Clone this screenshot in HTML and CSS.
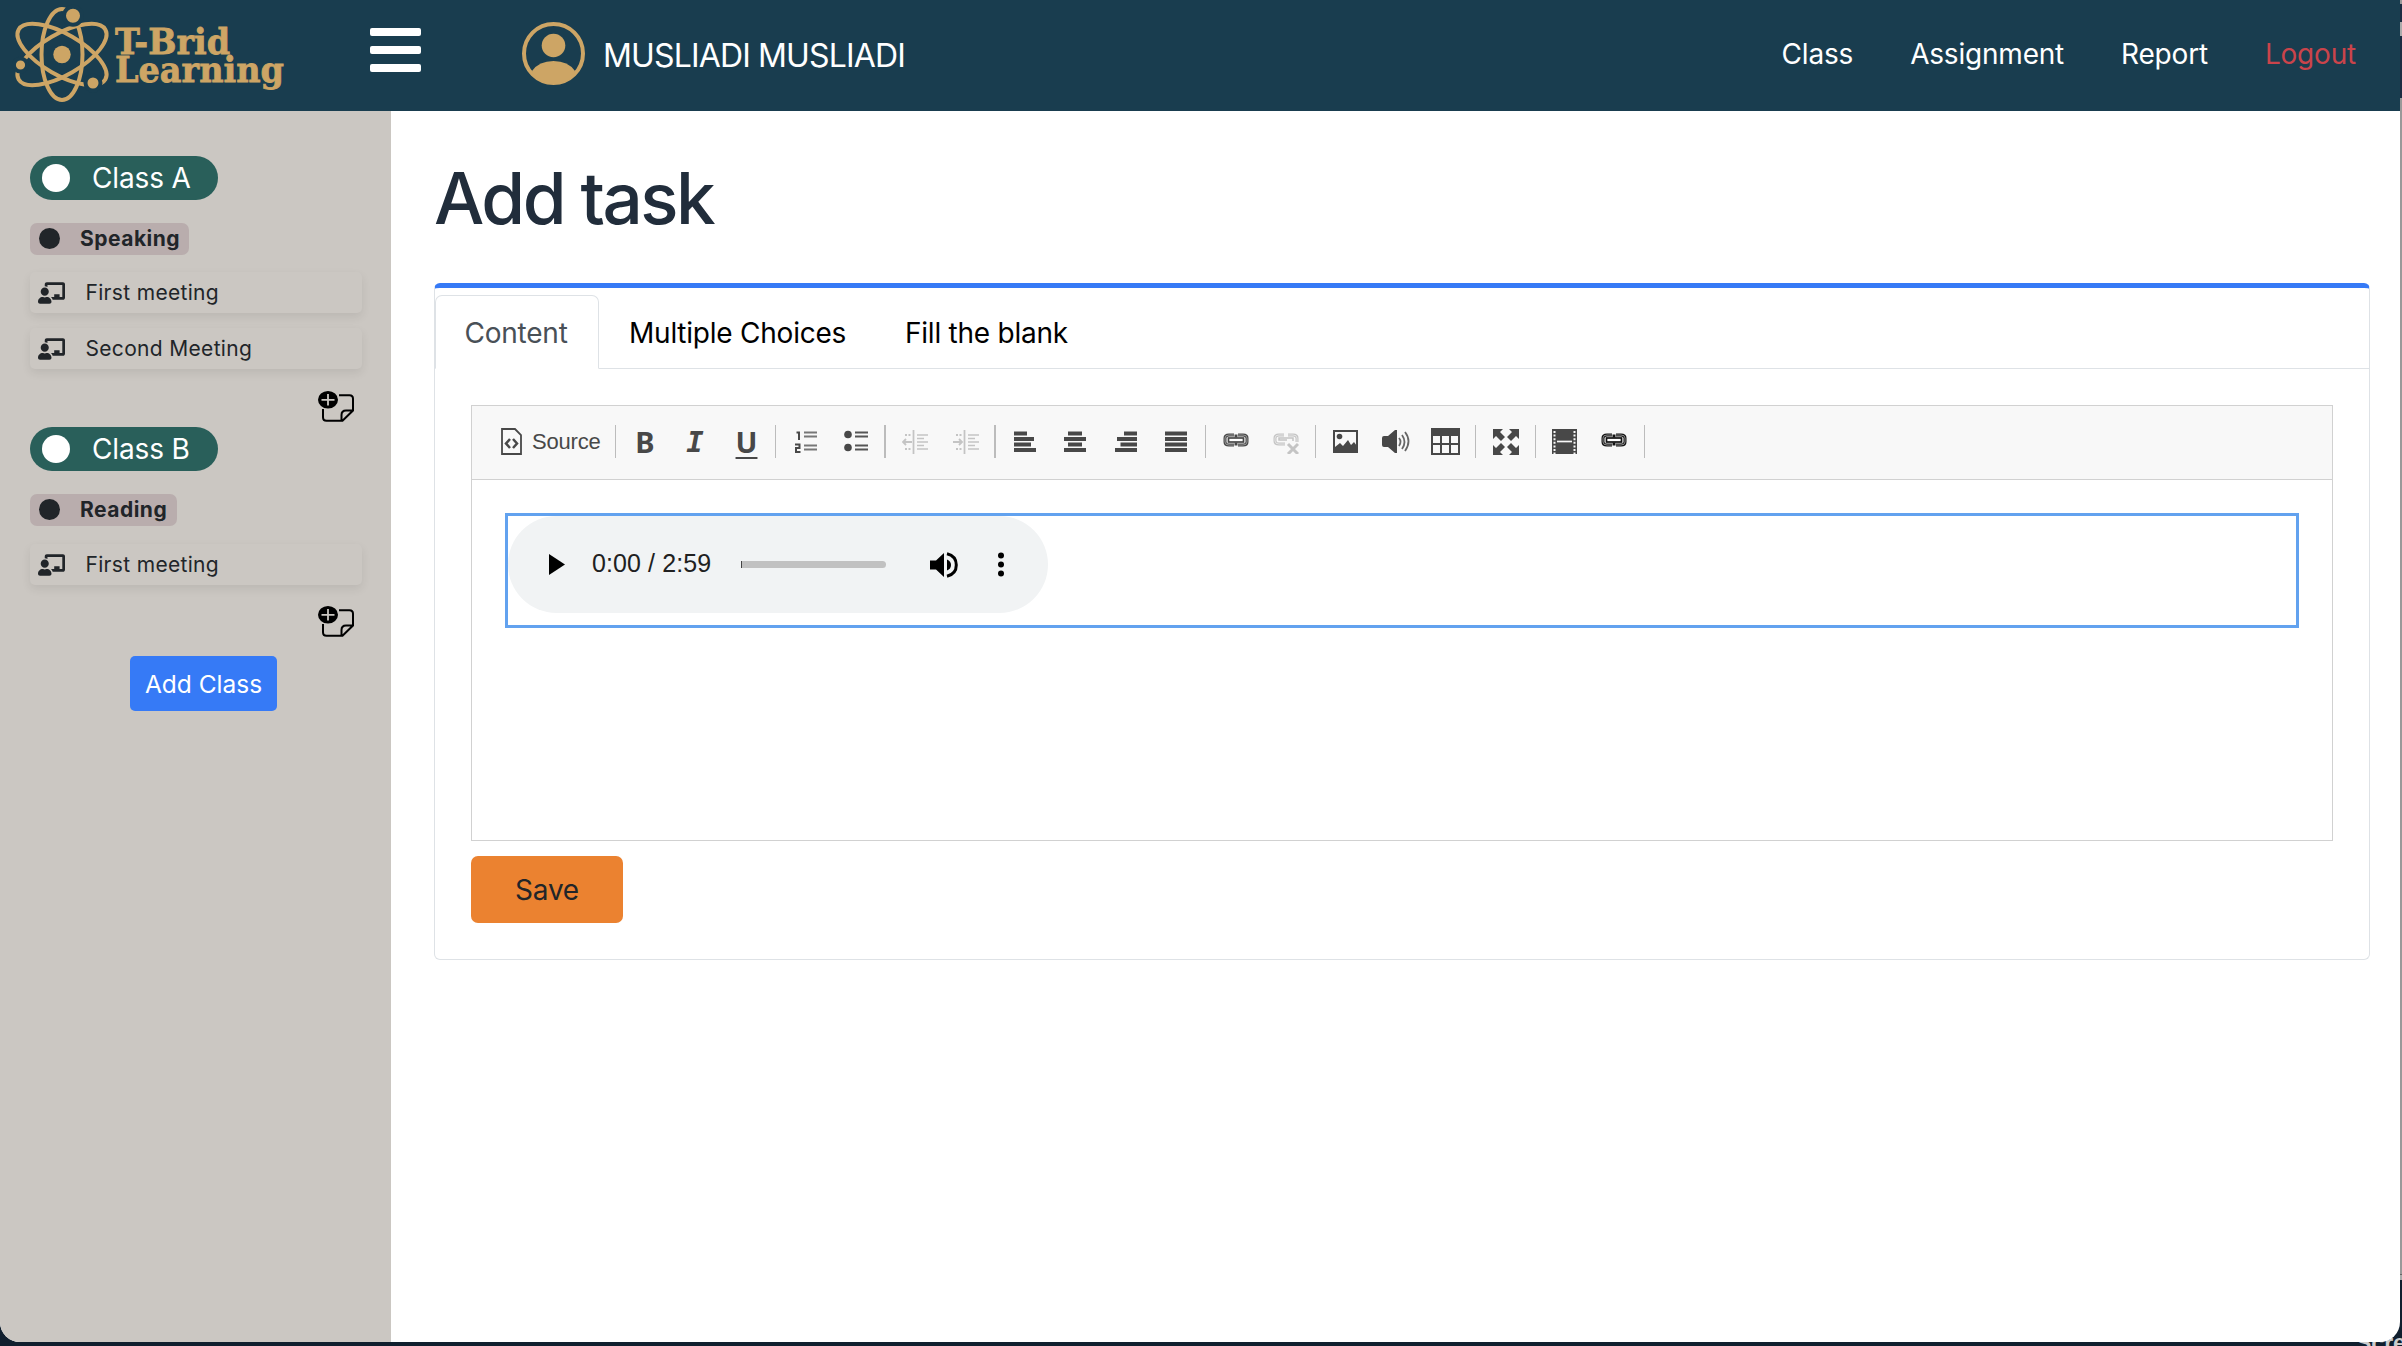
FILE: index.html
```html
<!DOCTYPE html>
<html lang="en">
<head>
<meta charset="utf-8">
<title>T-Brid Learning</title>
<link rel="stylesheet" href="styles.css">
</head>
<body>
<svg class="defs" width="0" height="0">
  <symbol id="teacher" viewBox="0 0 640 512"><path fill="currentColor" d="M208 352c-2.39 0-4.78.35-7.06 1.09C187.98 357.3 174.35 360 160 360c-14.35 0-27.98-2.7-40.95-6.91-2.28-.74-4.66-1.09-7.05-1.09C49.94 352-.33 402.48 0 464.62.14 490.88 21.73 512 48 512h224c26.27 0 47.86-21.12 48-47.38.33-62.14-49.94-112.62-112-112.62zm-48-32c53.02 0 96-42.98 96-96s-42.98-96-96-96-96 42.98-96 96 42.98 96 96 96zM592 0H208c-26.47 0-48 22.25-48 49.59V96c23.42 0 45.1 6.78 64 17.8V64h352v288h-64v-64H384v64h-76.24c19.1 16.69 33.12 38.73 39.69 64H592c26.47 0 48-22.25 48-49.59V49.59C640 22.25 618.47 0 592 0z"/></symbol>
  <symbol id="note" viewBox="0 0 36 31">
    <path d="M21 4.300h10.500q3.500 0 3.500 3.500v11.700L24.500 29.800H8.500q-3.500 0-3.500-3.500V18M35 19.600h-7q-4.500 0-4.500 4.500v5.500" fill="none" stroke="#000" stroke-width="2"/>
    <ellipse cx="10" cy="8.800" rx="10" ry="8.800" fill="#000"/>
    <path d="M10 3v11.600M3.500 8.800h13" stroke="#cbc7c2" stroke-width="1.800"/>
  </symbol>
  <symbol id="link" viewBox="0 0 26 14">
    <path d="M11 2H6Q2 2 2 5v4q0 3 4 3h5M15 2h5q4 0 4 3v4q0 3-4 3h-5" fill="none" stroke="currentColor" stroke-width="3"/>
    <path d="M11 2H6Q2 2 2 5v4q0 3 4 3h5M15 2h5q4 0 4 3v4q0 3-4 3h-5" fill="none" stroke="#aaa" stroke-width=".8"/>
    <path d="M13 1.500v3M13 9.500v3" stroke="currentColor" stroke-width="3"/>
    <rect x="5.500" y="5" width="15" height="4" fill="#fff" stroke="currentColor" stroke-width="1.700"/>
  </symbol>
</svg>
<div class="window">
  <header class="topbar">
    <svg class="logo" width="300" height="111" viewBox="0 0 300 111">
      <g fill="none" stroke="#cda565" stroke-width="4">
        <ellipse cx="62" cy="54.500" rx="20.500" ry="45.500"/>
        <ellipse cx="62" cy="54.500" rx="20.500" ry="50" transform="rotate(60 62 54.500)"/>
        <ellipse cx="62" cy="54.500" rx="20.500" ry="50" transform="rotate(-60 62 54.500)"/>
      </g>
      <g fill="#cda565" stroke="#193d4f" stroke-width="4">
        <circle cx="62" cy="54.500" r="8.700" stroke="none"/>
        <circle cx="73" cy="15.700" r="9"/>
        <circle cx="20.500" cy="65" r="6.600"/>
        <circle cx="93" cy="83" r="7.500"/>
      </g>
      <g class="logo-text">
        <text x="115" y="54" textLength="115" lengthAdjust="spacingAndGlyphs">T-Brid</text>
        <text x="115" y="82" textLength="169" lengthAdjust="spacingAndGlyphs">Learning</text>
      </g>
    </svg>
    <div class="burger"><i></i><i></i><i></i></div>
    <svg class="avatar" width="63" height="63" viewBox="0 0 63 63">
      <circle cx="31.500" cy="31.500" r="29.500" fill="none" stroke="#cda565" stroke-width="4"/>
      <circle cx="31.500" cy="23.500" r="11.800" fill="#cda565"/>
      <path d="M10 49Q17 39 31.500 39T53 49L51 55Q43 62 31.500 62T12 55z" fill="#cda565"/>
    </svg>
    <span class="user">MUSLIADI MUSLIADI</span>
    <nav class="nav"><a>Class</a><a>Assignment</a><a>Report</a><a class="logout">Logout</a></nav>
  </header>
  <div class="body">
    <aside class="side">
      <div class="pill"><i></i><span>Class A</span></div>
      <div class="badge"><i></i><span>Speaking</span></div>
      <div class="item"><svg width="27" height="22"><use href="#teacher"/></svg><span>First meeting</span></div>
      <div class="item"><svg width="27" height="22"><use href="#teacher"/></svg><span>Second Meeting</span></div>
      <svg class="note" width="36" height="31"><use href="#note"/></svg>
      <div class="pill"><i></i><span>Class B</span></div>
      <div class="badge reading"><i></i><span>Reading</span></div>
      <div class="item"><svg width="27" height="22"><use href="#teacher"/></svg><span>First meeting</span></div>
      <svg class="note last" width="36" height="31"><use href="#note"/></svg>
      <button class="add">Add Class</button>
    </aside>
    <main class="main">
      <h1>Add task</h1>
      <section class="card">
        <div class="tabs"><div class="tab active">Content</div><div class="tab mc">Multiple Choices</div><div class="tab">Fill the blank</div></div>
        <div class="pane">
          <div class="editor">
            <div class="tools">
              <div class="source"><svg width="21" height="27" viewBox="0 0 21 27" fill="none" stroke="#484848"><path d="M1 1h13l6 6v19H1z" stroke-width="1.800"/><path d="M9 11l-4 4.500L9 20M12 11l4 4.500L12 20" stroke-width="2.500"/></svg><span>Source</span></div>
              <s></s>
              <b class="bold">B</b><b class="ital">I</b><b class="und">U</b>
              <s></s>
              <b class="nudge"><svg width="24" height="24" viewBox="0 0 24 24"><path d="M10 2.500h13M10 6.500h13M10 15.500h13M10 19.500h13" stroke="#777" stroke-width="2"/><path d="M2.500 2.500H5V10M1 14.500h4.500v3.500H2v4h4.500" fill="none" stroke="#484848" stroke-width="2"/></svg></b>
              <b class="nudge"><svg width="24" height="24" viewBox="0 0 24 24"><path d="M11 2.500h13M11 6.500h13M11 15.500h13M11 19.500h13" stroke="#555" stroke-width="2"/><circle cx="4" cy="4.500" r="3.800"/><circle cx="4" cy="17.500" r="3.800"/></svg></b>
              <s class="wide"></s>
              <b class="dim"><svg width="26" height="24" viewBox="0 0 26 24" stroke="currentColor" fill="none"><path d="M11.500 0v24" stroke-width="1.800"/><path d="M15 5h11M15 8.500h7M15 12h11M15 15.500h7M15 19h11" stroke-width="1.500"/><path d="M3 5h6M3 19h6" stroke-width="2" stroke-dasharray="2 1.500"/><path d="M10 12H1M4 9l-3 3 3 3" stroke-width="1.800"/></svg></b>
              <b class="dim nudge"><svg width="26" height="24" viewBox="0 0 26 24" stroke="currentColor" fill="none"><path d="M11.500 0v24" stroke-width="1.800"/><path d="M15 5h11M15 8.500h7M15 12h11M15 15.500h7M15 19h11" stroke-width="1.500"/><path d="M3 5h6M3 19h6" stroke-width="2" stroke-dasharray="2 1.500"/><path d="M0 12h9M6 9l3 3-3 3" stroke-width="1.800"/></svg></b>
              <s class="wide"></s>
              <b><svg width="22" height="22" viewBox="0 0 22 22" stroke="#484848" stroke-width="4"><path d="M0 2.500h13M0 8h20M0 13.500h17M0 19h22"/></svg></b>
              <b><svg width="22" height="22" viewBox="0 0 22 22" stroke="#484848" stroke-width="4"><path d="M4 2.500h14M0 8h22M4 13.500h14M0 19h22"/></svg></b>
              <b class="nudge"><svg width="22" height="22" viewBox="0 0 22 22" stroke="#484848" stroke-width="4"><path d="M9 2.500h13M2 8h20M5.500 13.500H22M0 19h22"/></svg></b>
              <b class="nudge"><svg width="22" height="22" viewBox="0 0 22 22" stroke="#484848" stroke-width="4"><path d="M0 2.500h22M0 8h22M0 13.500h22M0 19h22"/></svg></b>
              <s></s>
              <b class="lnk nudge"><svg width="26" height="14"><use href="#link"/></svg></b>
              <b class="dim nudge"><svg width="26" height="24" viewBox="0 0 26 24" fill="none" stroke="currentColor"><path d="M11 5H6Q2 5 2 8v3q0 3 4 3h6M15 5h5q4 0 4 3v4" stroke-width="3"/><path d="M11 5H6Q2 5 2 8v3q0 3 4 3h6M15 5h5q4 0 4 3v4" stroke="#eee" stroke-width=".8"/><path d="M14 10H6V8h14v3" stroke-width="1.500"/><path d="M15 14l10 10M25 14L15 24" stroke-width="3"/></svg></b>
              <s></s>
              <b><svg width="25" height="23" viewBox="0 0 25 23"><rect x="1" y="1" width="23" height="21" fill="#f8f8f8" stroke="#484848" stroke-width="2"/><circle cx="6.500" cy="6.500" r="2.800"/><path d="M2 21v-4l5-4 3 3 5-6 3 5 3-3 3 4v5z"/></svg></b>
              <b class="nudge"><svg width="28" height="24" viewBox="0 0 28 24"><path d="M0 8q0-2 2-2h4l7-6h2v23h-2l-7-6H2q-2 0-2-2z"/><path d="M17 8q3 3.500 0 8M20 5q5 7 0 14M23 2q7 9 0 19" fill="none" stroke="#666" stroke-width="1.800"/></svg></b>
              <b><svg width="29" height="27" viewBox="0 0 29 27"><path d="M0 0h29v27H0z"/><path d="M2 8h7v7H2zM11 8h7v7h-7zM20 8h7v7h-7zM2 17h7v8H2zM11 17h7v8h-7zM20 17h7v8h-7z" fill="#f8f8f8"/></svg></b>
              <s></s>
              <b class="nudge"><svg width="26" height="26" viewBox="0 0 26 26"><path id="ar" d="M0 0h10L7 3l5 5-4 4-5-5-3 3z"/><use href="#ar" transform="matrix(-1 0 0 1 26 0)"/><use href="#ar" transform="matrix(1 0 0 -1 0 26)"/><use href="#ar" transform="matrix(-1 0 0 -1 26 26)"/></svg></b>
              <s></s>
              <b class="narrow"><svg width="25" height="25" viewBox="0 0 25 25"><path d="M0 0h25v25H0z"/><path d="M2.500 2v23M22.500 2v23" stroke="#f8f8f8" stroke-width="2" stroke-dasharray="2 1.600"/><path d="M5 12.500h15" stroke="#f8f8f8" stroke-width="1.700"/></svg></b>
              <b class="lnk dark"><svg width="26" height="14"><use href="#link"/></svg></b>
              <s></s>
            </div>
            <div class="content">
              <div class="selected">
                <div class="player">
                  <svg class="play" width="16" height="21" viewBox="0 0 16 21"><path d="M0 0l16 10.500L0 21z"/></svg>
                  <span class="time">0:00 / 2:59</span>
                  <div class="track"></div>
                  <svg class="vol" width="28" height="26" viewBox="0 0 28 26"><path d="M0 8.500h6L14 1v24l-8-7.500H0z"/><path d="M17 7.500q4 1.500 4 5.500t-4 5.500z"/><path d="M17 1.700Q26.300 4 26.300 13T17 24.300" fill="none" stroke="#000" stroke-width="3"/></svg>
                  <svg class="dots" width="6" height="25" viewBox="0 0 6 25"><circle cx="3" cy="3.500" r="3"/><circle cx="3" cy="12.500" r="3"/><circle cx="3" cy="21.500" r="3"/></svg>
                </div>
              </div>
            </div>
          </div>
          <button class="save">Save</button>
        </div>
      </section>
    </main>
  </div>
</div>
<div class="behind">Scre</div>
</body>
</html>
```
FILE: styles.css
```css
* { box-sizing: border-box; }
body { margin: 0; width: 2402px; height: 1346px; overflow: hidden; position: relative; background: #101f2e; font-family: Inter, "Liberation Sans", sans-serif; color: #212529; }
svg { display: block; flex: none; }
.defs { position: absolute; }
button { border: 0; padding: 0; font: inherit; }
span, a, h1, .tab { white-space: nowrap; }

/* desktop showing past the window's edges */
body::after { content: ""; position: absolute; right: 0; top: 0; width: 2px; height: 1280px; background: linear-gradient(#999 0 4px, #1c2c42 4px 22px, #aaa 22px 36px, #1c2c42 36px 98px, #999 98px 1274px, #666 1274px 1275px, #aaa 1275px); }
.behind { position: absolute; left: 2356px; top: 1330px; font: bold 23px/26px "Liberation Sans", sans-serif; color: #ccc; }

.window { position: relative; z-index: 1; width: 2400px; height: 1342px; border-radius: 0 0 20px 20px; overflow: hidden; background: #fff; }
.topbar { height: 111px; background: #193d4f; display: flex; align-items: flex-start; }
.logo-text { font: bold 36px "DejaVu Serif", serif; fill: #cda565; stroke: #cda565; stroke-width: .8px; }
.burger { width: 51px; margin: 28px 0 0 70px; display: grid; gap: 10px; }
.burger i { height: 8px; border-radius: 2px; background: #fff; }
.avatar { margin: 22px 0 0 101px; }
.user { margin-left: 18px; color: #fff; font-size: 32px; line-height: 112px; letter-spacing: -.85px; }
.nav { margin-left: auto; padding-right: 44px; display: flex; gap: 57px; font-size: 28px; line-height: 109px; letter-spacing: -.2px; color: #fff; }
.logout { color: #ca444b; }

.body { display: flex; height: 1231px; }
.side { width: 391px; background: #cbc7c2; padding: 45px 29px 0 30px; display: flex; flex-direction: column; align-items: flex-start; }
.pill { width: 188px; height: 44px; border-radius: 22px; background: #295f5a; color: #fff; display: flex; align-items: center; font-size: 28px; letter-spacing: -.15px; padding: 0 0 1px 12px; }
.pill i { width: 28px; height: 28px; border-radius: 50%; background: #fff; margin-right: 22px; }
.badge { width: 159px; height: 32px; margin-top: 23px; border-radius: 7px; background: #b9adad; display: flex; align-items: center; padding: 0 0 2px 9px; font-size: 21px; font-weight: 700; letter-spacing: .5px; }
.badge.reading { width: 147px; }
.badge i { width: 21px; height: 21px; border-radius: 50%; background: #212529; margin-right: 20px; }
.item { width: 332px; height: 41px; margin-top: 17px; border-radius: 5px; display: flex; align-items: center; gap: 20.500px; padding: 0 8px; font-size: 21px; letter-spacing: .32px; background: #cbc7c2; box-shadow: 0 4px 10px rgba(0,0,0,.08); }
.item + .item { margin-top: 15px; }
.note { margin: 22px 8px 5px auto; }
.reading + .item { margin-top: 18px; }
.note.last { margin-top: 21px; margin-bottom: 19px; }
.add { width: 147px; height: 55px; padding-top: 1px; margin-left: 100px; border-radius: 5px; background: #367af6; color: #fff; font-size: 24.500px; }

.main { flex: 1; padding: 40px 30px 0 43px; }
h1 { margin: 0; height: 132px; font-size: 71px; line-height: 94px; font-weight: 500; letter-spacing: -2.500px; color: #212d3b; }
.card { height: 677px; border: 1px solid #dee2e6; border-top: 5px solid #367af6; border-radius: 6px; }
.tabs { height: 81px; padding-top: 7px; display: flex; border-bottom: 1px solid #dee2e6; font-size: 28px; letter-spacing: -.23px; color: #000; }
.tab { height: 74px; display: flex; align-items: center; padding: 2px 0 0 30px; }
.tab.active { width: 164px; padding-left: 28.500px; border: 1px solid #dee2e6; border-bottom-color: #fff; border-radius: 7px 7px 0 0; color: #495057; }
.mc { width: 276px; }
.pane { padding: 36px 36px 0; }
.editor { height: 436px; border: 1px solid #d1d1d1; }
.tools { height: 74px; background: #f8f8f8; border-bottom: 1px solid #d1d1d1; display: flex; align-items: center; padding: 0 0 2px 18px; color: #484848; }
.tools svg { fill: #484848; }
.source { width: 120px; display: flex; align-items: center; gap: 10px; padding-left: 11px; font: 22px "Liberation Sans", sans-serif; letter-spacing: -.2px; }
.tools .source svg { fill: none; }
.tools b { width: 50px; height: 40px; display: flex; align-items: center; justify-content: center; font: bold 29px/40px "Noto Sans", sans-serif; }
.tools .ital { font-family: "DejaVu Sans Mono", monospace; font-style: italic; }
.tools .und { padding-left: 3px; text-decoration: underline; text-underline-offset: 4px; text-decoration-thickness: 2px; }
.tools s { width: 10px; height: 33px; background: linear-gradient(#bcbcbc, #bcbcbc) 5px 0 / 1px 33px no-repeat; }
.tools s.wide { background-size: 2px 33px; background-position: 4px 0; }
.tools .nudge { padding-left: 2px; }
.tools .narrow { width: 49px; }
.tools .dim { color: #c4c4c4; }
.tools .dim svg { fill: none; }
.tools .lnk { padding-bottom: 3px; }
.tools .dark { color: #111; }
.content { padding: 33px; }
.selected { height: 115px; border: 3px solid #62a2ef; }
.player { width: 540px; height: 97px; border-radius: 48.500px; background: #f1f3f4; display: flex; align-items: center; padding-left: 41px; }
.time { width: 149px; margin-left: 27px; padding-bottom: 2px; font: 25px "Liberation Sans", sans-serif; letter-spacing: .1px; color: #202020; }
.track { width: 145px; height: 7px; border-radius: 0 4px 4px 0; background: #c1c1c1; border-left: 1px solid #444; }
.vol { margin-left: 44px; }
.dots { margin-left: 40px; }
.save { display: block; width: 152px; height: 67px; margin-top: 15px; border-radius: 7px; background: #eb8230; color: #212529; font-size: 28px; letter-spacing: -.2px; }
```
